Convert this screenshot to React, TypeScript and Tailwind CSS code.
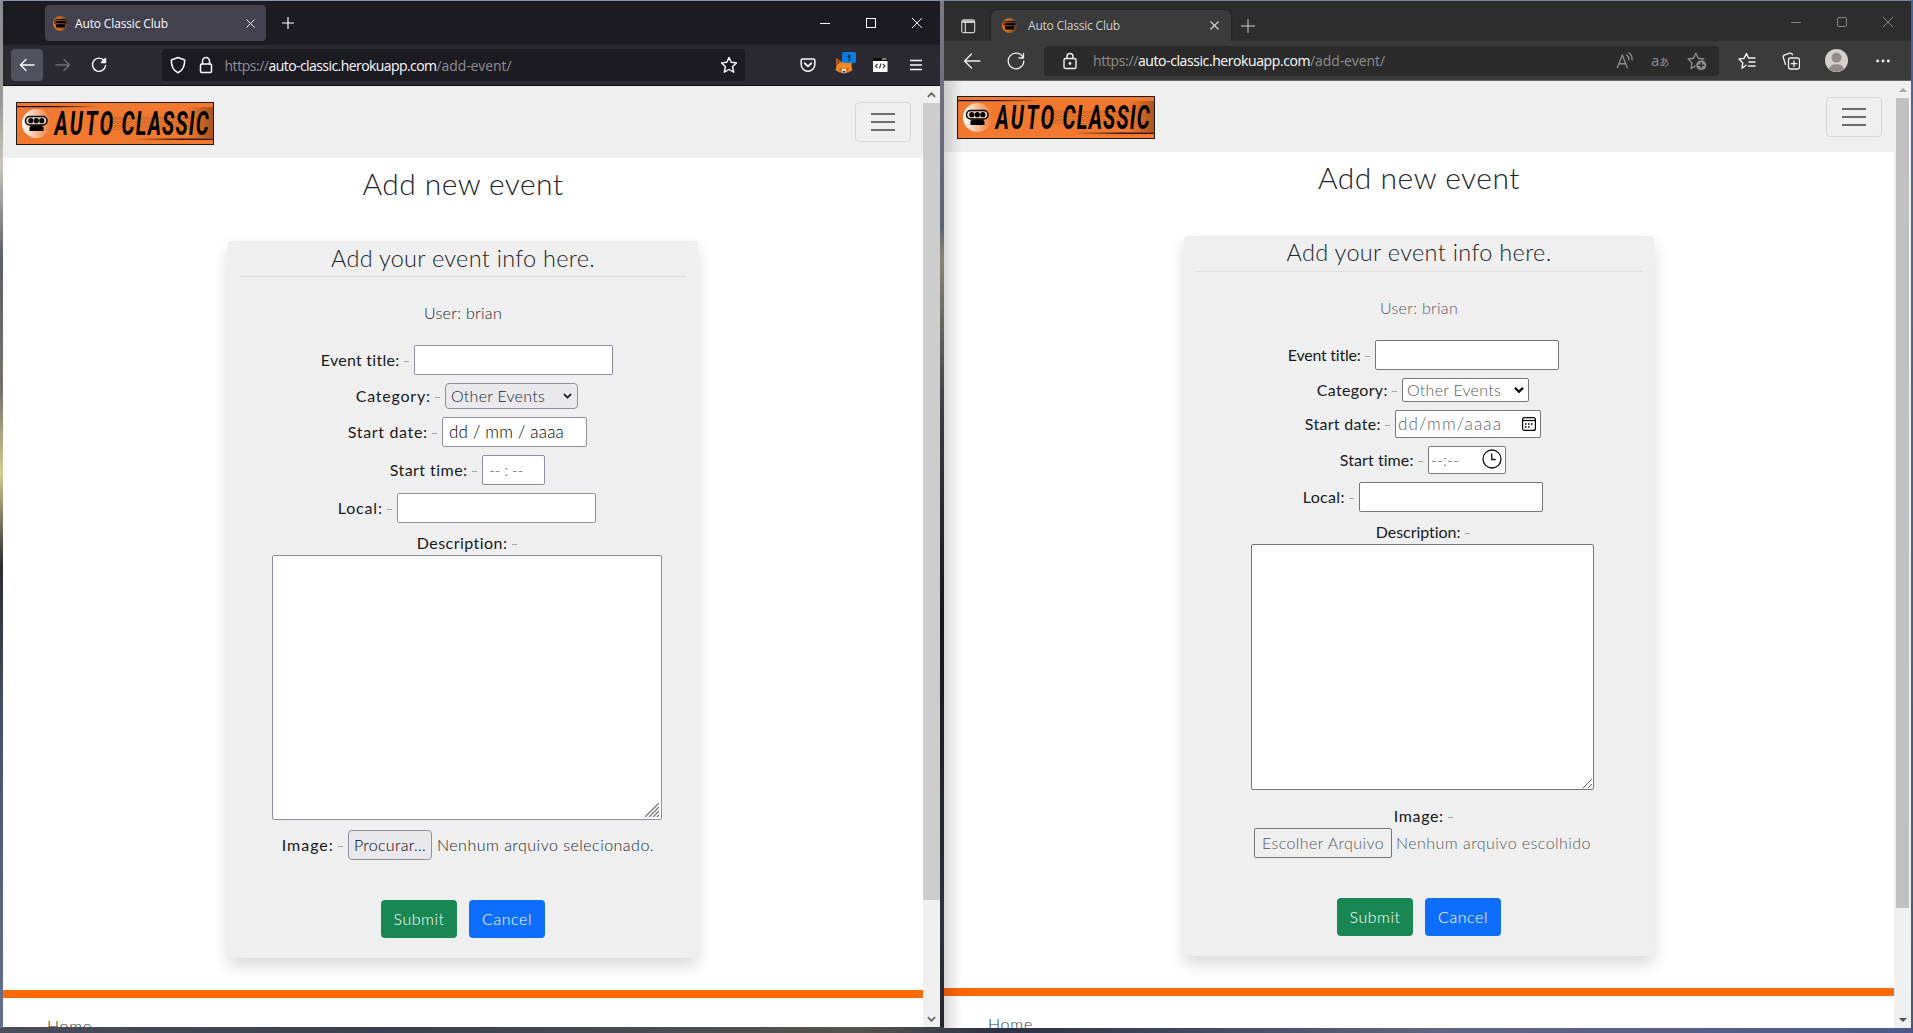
import { useId, useLayoutEffect, useRef, useState } from "react";
import type { ReactNode } from "react";

/* Single line of text whose tracking is adjusted so that it fills the width of its box. */
function Fit({ children, className }: { children: string; className: string }) {
  const box = useRef<HTMLSpanElement>(null);
  const ink = useRef<HTMLSpanElement>(null);
  const [spacing, setSpacing] = useState(0);
  useLayoutEffect(() => {
    if (!box.current || !ink.current) return;
    ink.current.style.letterSpacing = "0px";
    const free = box.current.getBoundingClientRect().width - ink.current.getBoundingClientRect().width;
    const next = free / children.length;
    ink.current.style.letterSpacing = `${next}px`;
    setSpacing(next);
  }, [children]);
  return (
    <span ref={box} className={`block shrink-0 whitespace-pre ${className}`}>
      <span ref={ink} style={{ letterSpacing: spacing }}>{children}</span>
    </span>
  );
}

function Blower() {
  return (
    <g>
      <rect x="3" y="6.5" width="22" height="9" rx="4.5" fill="none" stroke="#000" strokeWidth="1.6" />
      <rect x="5.2" y="8.7" width="17.6" height="4.8" rx="2.4" />
      <path d="M7 16h14l1.5 2v3.5h-17V18z" />
    </g>
  );
}

function Favicon() {
  const id = useId();
  return (
    <svg viewBox="0 0 28 28" className="h-[15px] w-[15px] shrink-0">
      <defs>
        <linearGradient id={id} x1="0" x2="1">
          <stop offset="0" stopColor="#f07a10" />
          <stop offset="0.55" stopColor="#b5641d" />
          <stop offset="1" stopColor="#4a4038" />
        </linearGradient>
      </defs>
      <circle cx="14" cy="14" r="14" fill={`url(#${id})`} />
      <Blower />
    </svg>
  );
}

function Logo() {
  const id = useId();
  return (
    <svg viewBox="0 0 198 43" className="h-[43px] w-[198px] shrink-0">
      <defs>
        <linearGradient id={`${id}a`} x1="0" x2="1">
          <stop offset="0" stopColor="#000" />
          <stop offset="0.4" stopColor="#000" />
          <stop offset="1" stopColor="#000" stopOpacity="0" />
        </linearGradient>
        <linearGradient id={`${id}b`} x1="0" x2="1">
          <stop offset="0" stopColor="#000" stopOpacity="0" />
          <stop offset="0.6" stopColor="#000" />
        </linearGradient>
        <linearGradient id={`${id}c`} x1="0" x2="1">
          <stop offset="0" stopColor="#fff" />
          <stop offset="1" stopColor="#f0782f" />
        </linearGradient>
        <linearGradient id={`${id}e`} x1="0" x2="1">
          <stop offset="0" stopColor="#7a3a12" stopOpacity="0" />
          <stop offset="1" stopColor="#7a3a12" stopOpacity="0.6" />
        </linearGradient>
        <pattern id={`${id}d`} width="4" height="4" patternUnits="userSpaceOnUse">
          <path d="M0 0l2 2l2-2M0 3l2 1l2-1" fill="none" stroke="#8b4518" strokeOpacity="0.45" strokeWidth="0.8" />
        </pattern>
      </defs>
      <rect x="0.5" y="0.5" width="197" height="42" fill="#f0782f" stroke="#1a1a1a" />
      <rect x="85" y="14" width="90" height="14" fill={`url(#${id}d)`} />
      <rect x="172" y="5" width="25" height="31" fill={`url(#${id}e)`} />
      <rect x="1" y="4" width="82" height="1.2" fill={`url(#${id}a)`} />
      <rect x="117" y="36.6" width="80" height="1.2" fill={`url(#${id}b)`} />
      <circle cx="20.5" cy="21.5" r="14.5" fill={`url(#${id}c)`} />
      <g transform="translate(6.5 7.5)">
        <rect x="3" y="7" width="21.5" height="8.4" rx="4.2" fill="#f6d9c7" stroke="#000" strokeWidth="1.5" />
        <circle cx="8.3" cy="11.2" r="2.6" />
        <circle cx="13.8" cy="11.2" r="2.6" />
        <circle cx="19.3" cy="11.2" r="2.6" />
        <path d="M8 16h11.500l1 1.500h.500v4h-14v-4h.500z" />
      </g>
      <g transform="scale(0.6 1)" fontFamily="Roboto, sans-serif" fontWeight="700" fontStyle="italic" fontSize="34">
        <text x="64" y="33" textLength="98">AUTO</text>
        <text x="176" y="33" textLength="145">CLASSIC</text>
      </g>
    </svg>
  );
}

function Icon({ children, className = "h-[18px] w-[18px]", sw = 1.2 }: { children: ReactNode; className?: string; sw?: number }) {
  return (
    <svg viewBox="0 0 18 18" fill="none" stroke="currentColor" strokeWidth={sw} strokeLinecap="round" strokeLinejoin="round" className={`shrink-0 ${className}`}>
      {children}
    </svg>
  );
}

function WindowButtons({ round }: { round?: boolean }) {
  return (
    <div className="ml-auto flex items-center">
      <div className="flex w-[46px] justify-center"><div className="h-px w-[10px] bg-current" /></div>
      <div className="flex w-[46px] justify-center"><div className={round ? "h-[10px] w-[10px] rounded-[2px] border border-current" : "h-[10px] w-[10px] border border-current"} /></div>
      <div className="flex w-[46px] justify-center">
        <svg viewBox="0 0 10 10" className="h-[10px] w-[10px]" stroke="currentColor"><path d="M0 0L10 10M10 0L0 10" /></svg>
      </div>
    </div>
  );
}

function Toggler() {
  return (
    <div className="flex h-10 w-14 shrink-0 flex-col items-center justify-center gap-[6px] rounded border border-[#d7d7d7]">
      <div className="h-[2px] w-6 bg-[#6b6b6b]" />
      <div className="h-[2px] w-6 bg-[#6b6b6b]" />
      <div className="h-[2px] w-6 bg-[#6b6b6b]" />
    </div>
  );
}

function Label({ text, className }: { text: string; className: string }) {
  return (
    <>
      <Fit className={`translate-x-[0.75px] font-normal text-[#16191c] ${className}`}>{text}</Fit>
      <span className="ml-[5px] mr-[5px] h-px w-[5px] shrink-0 translate-y-[1px] bg-[#a5a5a5]" />
    </>
  );
}

function Buttons({ className }: { className: string }) {
  return (
    <div className={`flex gap-3 text-white ${className}`}>
      <div className="flex h-[38px] w-[76px] items-center justify-center rounded bg-[#198754]"><Fit className="w-[51px]">Submit</Fit></div>
      <div className="flex h-[38px] w-[76px] items-center justify-center rounded bg-[#0d6efd]"><Fit className="w-[50px]">Cancel</Fit></div>
    </div>
  );
}

function FirefoxWindow() {
  return (
    <section className="flex h-[1026px] w-[937px] shrink-0 flex-col overflow-hidden bg-white">
      <div className="flex h-11 shrink-0 items-center bg-[#1c1b22] pl-[42px] text-[#fbfbfe]">
        <div className="flex h-9 w-[221px] items-center rounded bg-[#42414d] pl-2 pr-[11px]">
          <Favicon />
          <Fit className="ml-[7px] w-[93px] pt-px font-['Open_Sans',sans-serif] text-[12px] font-normal">Auto Classic Club</Fit>
          <svg viewBox="0 0 10 10" className="ml-auto h-[9px] w-[9px]" stroke="currentColor"><path d="M.5 .5L9.500 9.500M9.500 .5L.5 9.500" /></svg>
        </div>
        <svg viewBox="0 0 12 12" className="ml-[15.500px] h-3 w-3" stroke="currentColor" strokeWidth="1.2"><path d="M6 0v12M0 6h12" /></svg>
        <WindowButtons />
      </div>
      <div className="flex h-[41px] shrink-0 items-center border-b border-[#0c0c0d] bg-[#2b2a33] pl-2 text-[#fbfbfe]">
        <div className="flex h-8 w-8 items-center justify-center rounded bg-[#52525e]">
          <Icon sw={1.4}><path d="M16 9H2.500M8 3.500L2.500 9L8 14.500" /></Icon>
        </div>
        <Icon className="ml-[11px] h-[18px] w-[18px] text-[#6f6e77]" sw={1.4}><path d="M2 9h13.500M10 3.500L15.500 9L10 14.500" /></Icon>
        <Icon className="ml-[18px] h-[18px] w-[18px]" sw={1.4}><path d="M14.500 5A6.600 6.600 0 1 0 15.600 9.500" /><path d="M15.500 2.500v4h-4z" fill="currentColor" /></Icon>
        <div className="ml-[54px] flex h-8 w-[583px] items-center rounded bg-[#1c1b22] px-[7px]">
          <Icon sw={1.5}><path d="M9 1.500L15.700 4C15.700 10 14 14.500 9 16.800C4 14.500 2.300 10 2.300 4Z" /></Icon>
          <Icon className="ml-[10px] h-[18px] w-[18px]" sw={1.5}><rect x="3.500" y="8" width="11" height="8.500" rx="1.200" /><path d="M5.500 8V5a3.500 3.500 0 0 1 7 0v3" /></Icon>
          <div className="ml-[9.500px] flex pt-[2px] font-['Open_Sans',sans-serif] text-[14px] font-normal text-[#8f8e98]">
            <Fit className="w-[44px]">https://</Fit>
            <Fit className="w-[168px] text-[#fbfbfe]">auto-classic.herokuapp.com</Fit>
            <Fit className="w-[75px]">/add-event/</Fit>
          </div>
          <Icon className="ml-auto h-[18px] w-[18px]" sw={1.4}><path d="M9 1.500l2.200 4.800l5.300.6l-3.900 3.600l1.100 5.700L9 13.500l-4.700 2.700l1.100-5.700L1.500 6.900l5.300-.6z" /></Icon>
        </div>
        <div className="ml-[54px] flex items-center gap-[18px]">
          <Icon sw={1.5}><path d="M3.500 3h11a1.300 1.300 0 0 1 1.300 1.300V8.500a6.800 6.800 0 0 1-13.600 0V4.300A1.300 1.300 0 0 1 3.500 3z" /><path d="M5.800 7.300L9 10.300l3.200-3" strokeWidth="1.8" /></Icon>
          <div className="relative h-[18px] w-[18px]">
            <svg viewBox="0 0 18 18" className="h-[18px] w-[18px]">
              <path d="M1 2L7 6h5l5-1l-.500 5L17.500 14l-4 2.500h-9L.5 14L1.500 10z" fill="#f08a24" />
              <path d="M1 2L6.500 6L2 9z" fill="#a3501d" />
              <path d="M4.500 12l3 1v2.500h-3zM13.500 12l-3 1v2.500h3z" fill="#cf5f16" />
              <path d="M7 13h4l.500 3.500L9 17.500L6.500 16.500z" fill="#e6dcd4" />
              <path d="M7.800 15h2.400v1.500H7.800z" fill="#222" />
            </svg>
            <span className="absolute -top-[4px] left-[7px] flex h-[11px] w-[14px] items-center justify-center rounded-[2px] bg-[#0b7bdc] font-['Open_Sans',sans-serif] text-[9px] font-semibold leading-none text-black">1</span>
          </div>
          <svg viewBox="0 0 18 18" className="h-[18px] w-[18px]">
            <rect x="2" y="2" width="14.500" height="3" fill="#08080c" /><path d="M11 3h4.500" stroke="#aaa" strokeWidth="1.500" />
            <rect x="2" y="5" width="14.500" height="11" fill="#fff" />
            <path d="M6.500 8l-2 2l2 2M12 8l2 2l-2 2M10 7.500l-1.500 5" fill="none" stroke="#333" strokeWidth="1.1" />
          </svg>
          <Icon sw={1.3}><path d="M3.500 4.500h11M3.500 9h11M3.500 13.500h11" /></Icon>
        </div>
      </div>
      <div className="flex min-h-0 flex-1">
        <main className="flex w-[920px] flex-col overflow-hidden">
          <header className="flex h-[72px] shrink-0 items-start justify-between bg-[#efefef] pl-[13px] pr-3 pt-4"><Logo /><Toggler /></header>
          <h1 className="flex h-[51px] shrink-0 items-center justify-center pb-[2px] text-[30px] leading-none text-[#212529]"><Fit className="w-[201px]">Add new event</Fit></h1>
          <article className="ml-[225px] mt-8 flex h-[717px] w-[470px] shrink-0 flex-col rounded bg-[#efefef] shadow-[0_8px_16px_rgba(0,0,0,0.15)]">
            <h2 className="mx-3 flex h-[36px] shrink-0 items-center justify-center border-b border-[#dcdce0] text-[23.500px] leading-none"><Fit className="w-[264px]">Add your event info here.</Fit></h2>
            <p className="mt-6 flex justify-center text-[#212529]"><Fit className="w-[78px]">User: brian</Fit></p>
            <div className="mt-5 flex flex-col gap-2">
              <div className="flex h-[30px] items-center pl-[92px]"><Label text="Event title:" className="w-[79px]" /><div className="h-[30px] w-[199px] rounded-[2px] border border-[#8f8f9d] bg-white" /></div>
              <div className="flex h-[26px] items-center pl-[127px]">
                <Label text="Category:" className="w-[75px]" />
                <div className="flex h-[26px] w-[133px] items-center rounded border border-[#8f8f9d] bg-[#e9e9ed] pl-[5px]">
                  <Fit className="w-[94px]">Other Events</Fit>
                  <svg viewBox="0 0 10 6" className="ml-[18px] h-[6px] w-[9px]" fill="none" stroke="#000" strokeWidth="1.8"><path d="M1 .8l4 4l4-4" /></svg>
                </div>
              </div>
              <div className="flex h-[30px] items-center pl-[119px]"><Label text="Start date:" className="w-[80px]" /><div className="flex h-[30px] w-[145px] items-center rounded-[2px] border border-[#8f8f9d] bg-white pl-[6px] text-black"><Fit className="w-[115px] text-[17px]">dd / mm / aaaa</Fit></div></div>
              <div className="flex h-[30px] items-center pl-[161px]"><Label text="Start time:" className="w-[78px]" /><div className="flex h-[30px] w-[63px] items-center rounded-[2px] border border-[#8f8f9d] bg-white pl-[6px] text-[#555]"><Fit className="w-[34px]">-- : --</Fit></div></div>
              <div className="flex h-[30px] items-center pl-[109px]"><Label text="Local:" className="w-[45px]" /><div className="h-[30px] w-[199px] rounded-[2px] border border-[#8f8f9d] bg-white" /></div>
              <div className="flex h-6 items-center pl-[188px]"><Label text="Description:" className="w-[91px]" /></div>
            </div>
            <div className="ml-11 flex h-[265px] w-[390px] shrink-0 items-end justify-end rounded-[2px] border border-[#8f8f9d] bg-white p-[2px]">
              <svg viewBox="0 0 14 14" className="h-[14px] w-[14px]" stroke="#777" strokeWidth="1.3"><path d="M0 14L14 0M4 14L14 4M8 14L14 8M12 14L14 12" /></svg>
            </div>
            <div className="mt-[10px] flex h-[30px] items-center pl-[53px]">
              <Label text="Image:" className="w-[52px]" />
              <div className="flex h-[30px] w-[84px] shrink-0 items-center justify-center rounded border border-[#8f8f9d] bg-[#e9e9ed] text-black"><Fit className="w-[72px]">Procurar...</Fit></div>
              <Fit className="ml-[5px] w-[217px] text-[#212529]">Nenhum arquivo selecionado.</Fit>
            </div>
            <Buttons className="mt-10 pl-[153px]" />
          </article>
          <div className="mt-8 h-2 shrink-0 bg-[#ff6708]" />
          <footer className="shrink-0 pl-[44px] pt-[16px] text-[#212529]"><Fit className="w-[45px]">Home</Fit></footer>
        </main>
        <aside className="flex w-[17px] flex-col items-center bg-[#f0f0f0]">
          <div className="flex h-[17px] items-center"><svg viewBox="0 0 10 6" className="h-[6px] w-[9px]" fill="none" stroke="#606060" strokeWidth="2"><path d="M1 5l4-4l4 4" /></svg></div>
          <div className="h-[797px] w-full bg-[#cdcdcd]" />
          <div className="mt-auto flex h-[17px] items-center"><svg viewBox="0 0 10 6" className="h-[6px] w-[9px]" fill="none" stroke="#606060" strokeWidth="2"><path d="M1 1l4 4l4-4" /></svg></div>
        </aside>
      </div>
    </section>
  );
}

function EdgeWindow() {
  return (
    <section className="relative flex h-[1027px] w-[967px] shrink-0 flex-col overflow-hidden bg-white">
      <div className="flex h-10 shrink-0 bg-[#2d2d2d] pl-4 text-[#d0d0d0]">
        <div className="flex h-[31px] items-center self-end">
          <Icon className="h-4 w-4" sw={1.3}><rect x="2" y="2" width="14.500" height="14.500" rx="2" /><path d="M3.500 4h11.500" strokeWidth="3" /><path d="M6 5v11" /></Icon>
        </div>
        <div className="ml-[15px] flex h-[31px] w-60 items-center self-end rounded-t-md bg-[#3b3b3b] pl-[11px] pr-[12px] shadow-[0_0_2px_#111]">
          <Favicon />
          <Fit className="ml-[11px] w-[92px] font-['Open_Sans',sans-serif] text-[12px] font-normal">Auto Classic Club</Fit>
          <svg viewBox="0 0 10 10" className="ml-auto h-[9px] w-[9px]" stroke="currentColor" strokeWidth="1.4"><path d="M.5 .5L9.500 9.500M9.500 .5L.5 9.500" /></svg>
        </div>
        <div className="ml-[10px] flex h-[31px] items-center self-end"><svg viewBox="0 0 14 14" className="h-[14px] w-[14px]" stroke="currentColor"><path d="M7 0v14M0 7h14" /></svg></div>
        <div className="ml-auto flex pt-[2px] text-[#858585]"><WindowButtons round /></div>
      </div>
      <div className="flex h-10 shrink-0 items-center border-b border-[#6b6766] bg-[#3b3b3b] pl-[19px] text-[#f0f0f0]">
        <Icon sw={1.3}><path d="M17 9H1.500M8.500 2L1.500 9l7 7" /></Icon>
        <Icon className="ml-[26px] h-[18px] w-[18px]" sw={1.3}><path d="M16 5.500A7.800 7.800 0 1 0 16.800 9M16.500 1.500v4.500h-4.500" /></Icon>
        <div className="ml-[19px] flex h-[30px] w-[675px] items-center rounded bg-[#2b2b2b] pl-[17px] pr-3">
          <Icon sw={1.4}><rect x="3" y="6.500" width="12" height="10" rx="1.500" /><path d="M6 6.500V4.500a3 3 0 0 1 6 0v2" /><circle cx="9" cy="11.500" r="0.700" fill="currentColor" /></Icon>
          <div className="ml-[14px] flex pt-px font-['Open_Sans',sans-serif] text-[14px] font-normal text-[#8e8e8e]">
            <Fit className="w-[45px]">https://</Fit>
            <Fit className="w-[172px] text-white">auto-classic.herokuapp.com</Fit>
            <Fit className="w-[75px]">/add-event/</Fit>
          </div>
          <div className="ml-auto flex items-center text-[#8e8e8e]">
            <Icon className="h-5 w-5 -translate-x-[3px]"><path d="M3 15L7.500 3.500L12 15M4.500 11.500h6M11.500 3.500q2 1.500 1.800 4.500M13.500 1.500q3 2.300 2.700 6.500" /></Icon>
            <span className="ml-[14px] flex w-5 items-baseline whitespace-nowrap font-['Open_Sans','Noto_Sans_CJK_JP',sans-serif] text-[15px] font-normal leading-5">a<span className="text-[10px]">あ</span></span>
            <Icon className="ml-[16px] h-5 w-5"><path d="M7.500 13.500l-3.800 2.200l.8-5L1 7.200l4.800-.7L8 2l2.200 4.500l5 .7" /><circle cx="12.800" cy="12.800" r="4.500" fill="currentColor" stroke="none" /><path d="M12.800 10.500v4.600M10.500 12.800h4.600" stroke="#2b2b2b" /></Icon>
          </div>
        </div>
        <Icon className="ml-[19px] h-[18px] w-[18px]" sw={1.4}><path d="M8 13.200L4 16.200l.8-5.300L1 7l5-.6L8.500 1.500l2 4.500h6.500M11 10h6M10.500 14h6.500" /></Icon>
        <Icon className="ml-[26px] h-[18px] w-[18px]" sw={1.3}><rect x="6.500" y="6" width="11" height="11" rx="2" /><path d="M12 8.800v5.600M9.200 11.600h5.600M3.500 12.500L1.300 5.500q-.5-2 1.500-2.700l5-1.600q2-.4 2.700 1.600" /></Icon>
        <svg viewBox="0 0 23 23" className="ml-[25px] h-[23px] w-[23px]"><circle cx="11.500" cy="11.500" r="11.500" fill="#d3d0ce" /><circle cx="11.500" cy="8.800" r="5" fill="#918c89" /><path d="M4 20.200q1-5 7.500-5t7.500 5q-7 5.500-15 0" fill="#918c89" /></svg>
        <Icon className="ml-[27px] h-4 w-4"><g fill="currentColor" stroke="none"><circle cx="3" cy="9" r="1.600" /><circle cx="9" cy="9" r="1.600" /><circle cx="15" cy="9" r="1.600" /></g></Icon>
      </div>
      <div className="flex min-h-0 flex-1">
        <main className="flex w-[950px] flex-col overflow-hidden">
          <header className="flex h-[71px] shrink-0 items-start justify-between bg-[#efefef] pl-[13px] pr-3 pt-[15px]"><Logo /><div className="pt-px"><Toggler /></div></header>
          <h1 className="flex h-[51px] shrink-0 items-center justify-center pb-[2px] text-[30px] leading-none text-[#212529]"><Fit className="w-[202px]">Add new event</Fit></h1>
          <article className="ml-[240px] mt-[33px] flex h-[720px] w-[470px] shrink-0 flex-col rounded bg-[#efefef] shadow-[0_8px_16px_rgba(0,0,0,0.15)]">
            <h2 className="mx-3 flex h-[36px] shrink-0 items-center justify-center border-b border-[#dedede] pb-[2px] text-[23.500px] leading-none text-[#212529]"><Fit className="w-[265px]">Add your event info here.</Fit></h2>
            <p className="mt-6 flex justify-center text-[#55585b]"><Fit className="w-[78px]">User: brian</Fit></p>
            <div className="mt-5 flex flex-col gap-2">
              <div className="flex h-[30px] items-center pl-[103px]"><Label text="Event title:" className="w-[73px]" /><div className="h-[30px] w-[184px] rounded-[2px] border border-[#767676] bg-white" /></div>
              <div className="flex h-6 items-center pl-[132px]">
                <Label text="Category:" className="w-[71px]" />
                <div className="flex h-6 w-[127px] items-center rounded-[2px] border border-[#767676] bg-white pl-1 text-[#55585b]">
                  <Fit className="w-[94px]">Other Events</Fit>
                  <svg viewBox="0 0 10 6" className="ml-[13px] h-[6px] w-[10px]" fill="none" stroke="#000" strokeWidth="2.200"><path d="M1 .8l4 4l4-4" /></svg>
                </div>
              </div>
              <div className="flex h-7 items-center pl-[120px]">
                <Label text="Start date:" className="w-[76px]" />
                <div className="flex h-7 w-[146px] items-center rounded-[2px] border border-[#767676] bg-white pl-[2px] text-[#5f6265]">
                  <Fit className="w-[104px] text-[17px]">dd/mm/aaaa</Fit>
                  <svg viewBox="0 0 14 14" className="ml-[20px] h-[14px] w-[14px]" fill="none" stroke="#000" strokeWidth="1.200"><rect x=".6" y=".6" width="12.800" height="12.800" rx="2" /><path d="M.6 3.500h12.800" /><path d="M6 7h1.500M9 7h1.500M3 10h1.500M6 10h1.500M3 7h1.500" strokeWidth="1.500" /></svg>
                </div>
              </div>
              <div className="flex h-7 items-center pl-[155px]">
                <Label text="Start time:" className="w-[74px]" />
                <div className="flex h-7 w-[78px] items-center rounded-[2px] border border-[#767676] bg-white pl-[2px] text-[#5f6265]">
                  <Fit className="w-[28px]">--:--</Fit>
                  <svg viewBox="0 0 20 20" className="ml-[23px] h-5 w-5 -translate-y-px" fill="none" stroke="#111" strokeWidth="1.300"><circle cx="10" cy="10" r="9" /><path d="M9.700 4.500v6h4" /></svg>
                </div>
              </div>
              <div className="flex h-[30px] items-center pl-[118px]"><Label text="Local:" className="w-[42px]" /><div className="h-[30px] w-[184px] rounded-[2px] border border-[#767676] bg-white" /></div>
              <div className="flex h-6 items-center pl-[191px]"><Label text="Description:" className="w-[85px]" /></div>
            </div>
            <div className="ml-[67px] flex h-[246px] w-[343px] shrink-0 items-end justify-end rounded-[2px] border border-[#767676] bg-white p-px">
              <svg viewBox="0 0 9 9" className="h-[9px] w-[9px]" stroke="#666"><path d="M0 9L9 0M5 9L9 5" /></svg>
            </div>
            <div className="mt-[14px] flex h-6 items-center pl-[209px]"><Label text="Image:" className="w-[50px]" /></div>
            <div className="flex h-[30px] items-center pl-[70px] text-[#55585b]">
              <div className="flex h-[30px] w-[138px] shrink-0 items-center justify-center rounded-[2px] border border-[#767676]"><Fit className="w-[122px]">Escolher Arquivo</Fit></div>
              <Fit className="ml-1 w-[195px]">Nenhum arquivo escolhido</Fit>
            </div>
            <Buttons className="mt-10 pl-[153px]" />
          </article>
          <div className="mt-8 h-2 shrink-0 bg-[#ff6708]" />
          <footer className="shrink-0 pl-[44px] pt-[16px] text-[#33373b]"><Fit className="w-[45px]">Home</Fit></footer>
        </main>
        <aside className="flex w-[17px] flex-col items-center bg-[#f0f0f0]">
          <div className="flex h-[17px] items-center pt-px"><svg viewBox="0 0 8 4" className="h-1 w-2" fill="#a3a3a3"><path d="M0 4L4 0l4 4z" /></svg></div>
          <div className="h-[810px] w-[13px] bg-[#c1c1c1]" />
          <div className="mt-auto flex h-[17px] items-center"><svg viewBox="0 0 8 4" className="h-1 w-2" fill="#505050"><path d="M0 0l4 4l4-4z" /></svg></div>
        </aside>
      </div>
      <div className="pointer-events-none absolute bottom-0 left-0 top-20 w-[18px] bg-gradient-to-r from-black/15 to-transparent" />
    </section>
  );
}

export default function App() {
  return (
    <div className="flex h-[1033px] w-[1913px] items-start overflow-hidden bg-[linear-gradient(to_right,#4a4d5a,#39404f_20%,#55534f_45%,#2c3144_52%,#5d6580_75%,#4d5a8c)] font-['Lato',sans-serif] text-[16px] font-light leading-6 text-[#212529]">
      <div className="h-[1028px] w-[3px] shrink-0 bg-[linear-gradient(#8b8d92,#9b9996_10%,#c9c5bd_16%,#5b6068_25%,#77716a_38%,#d8c98f_46%,#2a2c31_55%,#46526b_70%,#667089)]" />
      <div className="flex w-[941px] shrink-0 items-start border-t border-[#8a90ad] bg-[linear-gradient(#7b7a85,#5d6275_22%,#8a8475_25%,#3a3d46_40%,#16171c_60%,#2c3240_90%,#25272e)]"><FirefoxWindow /></div>
      <div className="flex shrink-0 border-t border-[#77809c]"><EdgeWindow /></div>
      <div className="h-[1033px] w-[2px] shrink-0 bg-[linear-gradient(#3f64a8,#5b6687_20%,#4c5674)]" />
    </div>
  );
}
